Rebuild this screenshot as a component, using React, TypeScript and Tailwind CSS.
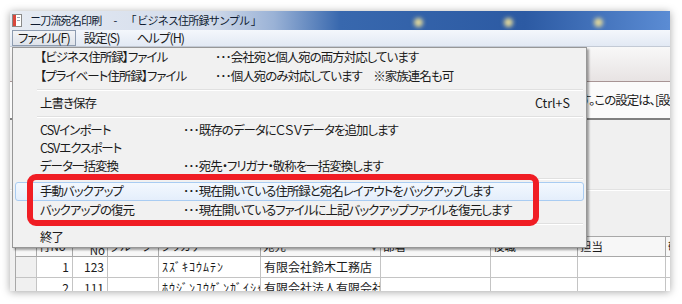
import React from 'react';

type MenuRow =
  | { sep: true; h: string }
  | {
      sep?: false;
      label: string;
      h: string;
      desc?: string;
      labelW?: string;
      shortcut?: string;
      hover?: boolean;
    };

const menuRows: MenuRow[] = [
  { label: '【ビジネス住所録】ファイル', h: 'h-[19px]', labelW: 'w-[175px]', desc: '･･･会社宛と個人宛の両方対応しています' },
  { label: '【プライベート住所録】ファイル', h: 'h-[19px]', labelW: 'w-[175px]', desc: '･･･個人宛のみ対応しています　※家族連名も可' },
  { sep: true, h: 'h-[8px]' },
  { label: '上書き保存', h: 'h-[19px]', shortcut: 'Ctrl+S' },
  { sep: true, h: 'h-[8px]' },
  { label: 'CSVインポート', h: 'h-[18px]', labelW: 'w-[143px]', desc: '･･･既存のデータにＣＳＶデータを追加します' },
  { label: 'CSVエクスポート', h: 'h-[18px]' },
  { label: 'データ一括変換', h: 'h-[18px]', labelW: 'w-[143px]', desc: '･･･宛先・フリガナ・敬称を一括変換します' },
  { sep: true, h: 'h-[7px]' },
  { label: '手動バックアップ', h: 'h-[19px]', labelW: 'w-[143px]', desc: '･･･現在開いている住所録と宛名レイアウトをバックアップします', hover: true },
  { label: 'バックアップの復元', h: 'h-[19px]', labelW: 'w-[143px]', desc: '･･･現在開いているファイルに上記バックアップファイルを復元します' },
  { sep: true, h: 'h-[8px]' },
  { label: '終了', h: 'h-[19px]' },
];

const cols = [
  { w: 'w-[21px]', head: '' },
  { w: 'w-[36px]', head: '行No' },
  { w: 'w-[35px]', head: 'No' },
  { w: 'w-[51px]', head: 'グループ' },
  { w: 'w-[102px]', head: 'フリガナ' },
  { w: 'w-[120px]', head: '宛先', drop: true },
  { w: 'w-[110px]', head: '部署' },
  { w: 'w-[87px]', head: '役職' },
  { w: 'w-[88px]', head: '担当' },
  { w: 'w-[60px]', head: '敬称' },
];

const rows = [
  ['', '1', '123', '', 'ｽｽﾞｷｺｳﾑﾃﾝ', '有限会社鈴木工務店', '', '', '', ''],
  ['', '2', '111', '', 'ﾎｳｼﾞﾝﾕｳｹﾞﾝｶﾞｲｼｬ', '有限会社法人有限会社', '', '', '', ''],
];

const AppIcon = () => (
  <svg width="10" height="13" viewBox="0 0 10 13">
    <rect x="0.5" y="0.5" width="9" height="12" fill="#fff" stroke="#8a8a8a" />
    <rect x="1" y="1" width="3" height="11" fill="#d9473d" />
    <rect x="5" y="3" width="3" height="1" fill="#9aa5b5" />
    <rect x="5" y="6" width="3" height="1" fill="#9aa5b5" />
  </svg>
);

const FileMenu = () => (
  <div className="absolute left-[2px] top-[36px] w-[575px] h-[201px] bg-[#f1f1f1] border border-[#979797] shadow-[2px_2px_2px_rgba(0,0,0,0.35)] text-[12.5px] tracking-[-1px] text-[#1b1b1b]">
    {menuRows.map((r, i) =>
      r.sep ? (
        <div key={i} className={`${r.h} flex items-center ml-[24px] mr-[3px]`}>
          <div className="w-full h-[2px] border-t border-[#e0e0e0] border-b border-b-white" />
        </div>
      ) : (
        <div
          key={i}
          className={`${r.h} mx-[2px] flex items-center pl-[24px] pr-[13px] rounded-[3px] border ${
            r.hover
              ? 'border-[#a9ccf2] bg-[linear-gradient(#f3f8fe,#e4eefb)]'
              : 'border-transparent'
          }`}
        >
          <span className={`${r.labelW ?? ''} whitespace-nowrap`}>{r.label}</span>
          {r.desc && <span className="whitespace-nowrap">{r.desc}</span>}
          {r.shortcut && <span className="ml-auto tracking-normal">{r.shortcut}</span>}
        </div>
      )
    )}
    <div className="absolute left-[14px] top-[126px] w-[512px] h-[52px] border-[6px] border-[#f01d24] rounded-[9px]" />
  </div>
);

export default function App() {
  return (
    <div className='w-[682px] h-[304px] bg-white pl-[10px] pt-[11px] font-["Noto_Sans_CJK_JP",sans-serif] [font-feature-settings:"palt"_1] overflow-hidden'>
      <div className="relative w-[660px] h-[280px] bg-[#f0f0f0] overflow-hidden shadow-[0_1px_8px_rgba(0,0,0,0.35)]">
        {/* title bar */}
        <div className="relative h-[19px] flex items-center pl-[2px] bg-[linear-gradient(90deg,#e6ebf3_0%,#d3dceb_30%,#9ab2d6_40%,#3868ae_50%,#2c5aa3_78%,#5b8cd4_100%)]">
          <AppIcon />
          <div className="ml-[8px] flex items-center text-[11px] tracking-[-0.8px] [font-feature-settings:normal] text-[#0e1a30] whitespace-nowrap">
            <span>二刀流宛名印刷</span>
            <span className="ml-[12px]">-</span>
            <span className="ml-[9px]">「 ビジネス住所録サンプル 」</span>
          </div>
          <div className="absolute left-[404px] top-[7px] w-[9px] h-[9px] rounded-full bg-[#e3d99a] blur-[2px]" />
          <div className="absolute left-[494px] top-[7px] w-[9px] h-[9px] rounded-full bg-[#e3d99a] blur-[2px]" />
          <div className="absolute left-[584px] top-[7px] w-[9px] h-[9px] rounded-full bg-[#e3d99a] blur-[2px]" />
        </div>
        {/* menu bar */}
        <div className="h-[17px] flex items-center text-[12.5px] tracking-[-1px] text-[#1b1b1b] bg-[linear-gradient(#f4f7fc,#e2e9f4)] border-b border-[#c3cad5]">
          <div className="ml-[2px] h-[16px] px-[5px] flex items-center border border-[#8e9cb0] bg-[linear-gradient(#f3f4f6,#dfe3ea)]">
            ファイル(F)
          </div>
          <span className="ml-[8px]">設定(S)</span>
          <span className="ml-[17px]">ヘルプ(H)</span>
        </div>
        {/* toolbar band */}
        <div className="h-[35px] bg-[linear-gradient(#f8f8f8,#e7e3e3)] border-b border-[#a89595]" />
        {/* info band */}
        <div className="h-[36px] bg-[#fbfbfb] flex items-center pl-[570px] text-[12.5px] tracking-[-1px] text-[#1b1b1b] whitespace-nowrap">
          す。この設定は、[設定]メニューから変更できます。
        </div>
        <div className="h-[2px] bg-[#808080]" />
        <div className="h-[70px] border-b border-[#e2e2e2]" />
        <div className="h-[46px] border-t border-white" />
        {/* grid */}
        <div className="ml-[5px] w-[720px] border-l border-t border-[#a8a8a8] text-[#1b1b1b]">
          <div className="flex h-[20px] bg-[#f7f7f7]">
            {cols.map((c, i) => (
              <div
                key={i}
                className={`${c.w} shrink-0 border-r border-b border-[#a8a8a8] flex px-[2px] text-[11.5px] relative ${
                  i === 2 ? 'items-end justify-end leading-[12px]' : 'items-center'
                }`}
              >
                <span className="whitespace-nowrap">{c.head}</span>
                {c.drop && <span className="absolute right-[3px] top-[6px] text-[6px] text-[#555]">▼</span>}
              </div>
            ))}
          </div>
          {rows.map((r, ri) => (
            <div key={ri} className="flex h-[21px]">
              {r.map((v, ci) => (
                <div
                  key={ci}
                  className={`${cols[ci].w} shrink-0 border-r border-b border-[#c4c4c4] flex items-center px-[3px] whitespace-nowrap overflow-hidden ${
                    ci === 0 ? 'bg-[#f0f0f0]' : 'bg-white'
                  } ${ci === 1 || ci === 2 ? 'justify-end text-[11.5px]' : ''} ${
                    ci === 4 ? 'text-[12px] tracking-[1px] [font-feature-settings:normal]' : 'text-[12px]'
                  }`}
                >
                  {v}
                </div>
              ))}
            </div>
          ))}
        </div>
        <FileMenu />
      </div>
    </div>
  );
}
